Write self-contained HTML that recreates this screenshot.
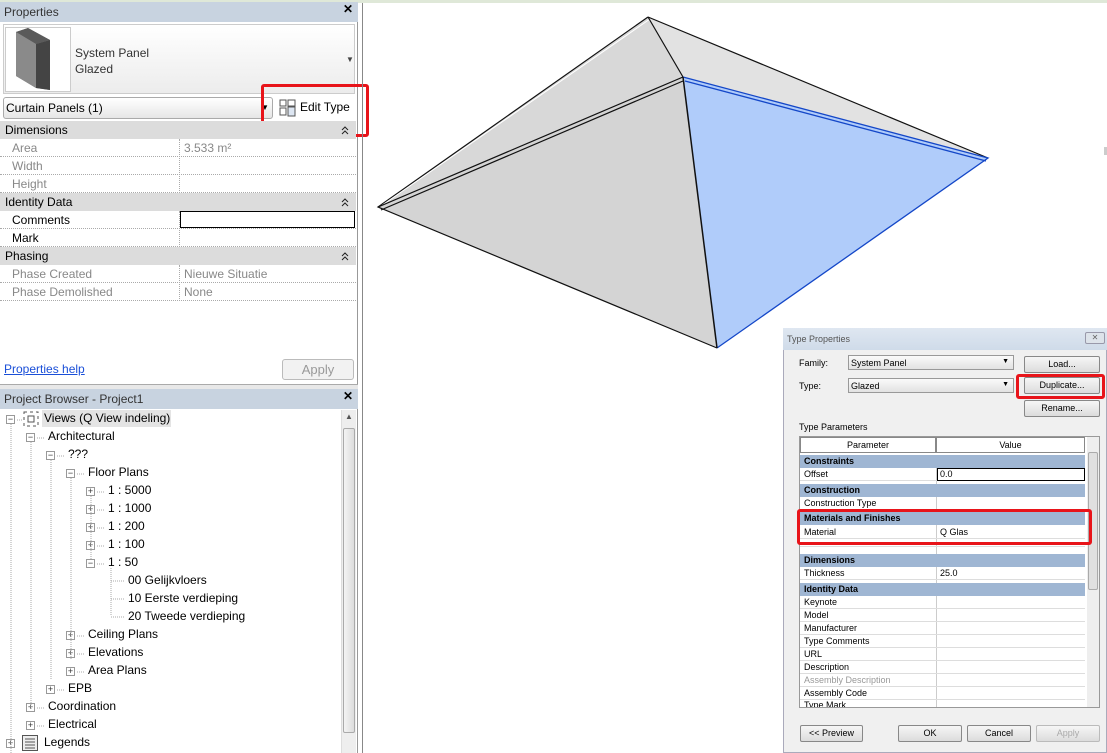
<!DOCTYPE html>
<html><head><meta charset="utf-8"><style>
*{margin:0;padding:0;box-sizing:border-box}
body{width:1107px;height:753px;overflow:hidden;background:#fff;font-family:"Liberation Sans",sans-serif;font-size:12px;color:#000;position:relative}
.a{position:absolute}
.hdr{background:#c8d3e0;color:#333;font-size:12px;padding:3px 4px;height:20px}
.sec{background:#dcdcdc;height:18px;padding:2px 5px;font-size:12px}
.sec i{position:absolute;right:7px;top:4px;width:8px;height:10px}
.row{height:18px;border-bottom:1px dotted #aaa;font-size:12px;color:#888}
.row span{position:absolute;top:2px}
.t{position:absolute;font-size:12px;white-space:nowrap}
.pm{position:absolute;width:9px;height:9px;border:1px solid #999;background:#fff;font-size:9px;line-height:7px;text-align:center;color:#333}
.dl{font-size:9px;font-family:"Liberation Sans",sans-serif}
.g{position:absolute;left:800px;width:285px;height:13px;font-size:9px;border-bottom:1px solid #ddd}
.gs{background:#9fb6d3;font-weight:bold;border:none}
.btn{position:absolute;border:1px solid #888;border-radius:2px;background:linear-gradient(#f6f6f6,#dcdcdc);font-size:9px;text-align:center;line-height:15px}
</style></head><body>
<div class="a" style="left:0;top:0;width:1107px;height:3px;background:#dfe8d8"></div>
<div class="a" style="left:0;top:2px;width:358px;height:751px;background:#fff;border-right:1px solid #999"></div>
<div class="a hdr" style="left:0;top:2px;width:358px">Properties<span style="position:absolute;right:5px;top:0px;font-weight:bold;color:#000">✕</span></div>
<div class="a" style="left:3px;top:24px;width:352px;height:70px;background:linear-gradient(#fff,#ececec);border:1px solid #ccc"></div>
<div class="a" style="left:5px;top:27px;width:66px;height:65px;background:#fff;border:1px solid #ccc"></div>
<svg class="a" style="left:14px;top:28px" width="52" height="64"><polygon points="2,4 14,0 36,12 36,62 22,60 2,48" fill="#777"/><polygon points="22,16 36,12 36,62 22,60" fill="#444"/><polygon points="2,4 14,0 36,12 22,16" fill="#5a5a5a"/><polygon points="2,4 22,16 22,60 2,48" fill="#8a8a8a"/></svg>
<div class="t" style="left:75px;top:46px;color:#333">System Panel</div>
<div class="t" style="left:75px;top:62px;color:#333">Glazed</div>
<div class="t" style="left:346px;top:55px;font-size:8px;color:#444">▼</div>
<div class="a" style="left:3px;top:97px;width:270px;height:22px;border:1px solid #aaa;border-radius:3px;background:linear-gradient(#fff,#e6e6e6)"></div>
<div class="t" style="left:6px;top:101px;color:#000">Curtain Panels (1)</div>
<div class="t" style="left:261px;top:103px;font-size:8px">▼</div>
<svg class="a" style="left:279px;top:99px" width="18" height="18"><rect x="1" y="1" width="6" height="6" fill="none" stroke="#555"/><rect x="1" y="9" width="6" height="7" fill="none" stroke="#555"/><rect x="9" y="1" width="7" height="6" fill="none" stroke="#555"/><rect x="9" y="8" width="7" height="9" fill="#dde6f2" stroke="#555"/></svg>
<div class="t" style="left:300px;top:100px;color:#000">Edit Type</div>
<div class="a" style="left:261px;top:84px;width:108px;height:53px;border:3px solid #e8141a;border-radius:3px"></div>
<div class="a sec" style="left:0;top:121px;width:356px">Dimensions<i><svg width="8" height="10"><path d="M1 4l3-3 3 3M1 8l3-3 3 3" fill="none" stroke="#222"/></svg></i></div>
<div class="a" style="left:0;top:139px;width:356px">
<div class="row" style="position:relative"><span style="left:12px">Area</span><span style="left:184px">3.533 m²</span></div>
<div class="row" style="position:relative"><span style="left:12px">Width</span></div>
<div class="row" style="position:relative"><span style="left:12px">Height</span></div>
</div>
<div class="a sec" style="left:0;top:193px;width:356px">Identity Data<i><svg width="8" height="10"><path d="M1 4l3-3 3 3M1 8l3-3 3 3" fill="none" stroke="#222"/></svg></i></div>
<div class="a" style="left:0;top:211px;width:356px">
<div class="row" style="position:relative;color:#000"><span style="left:12px">Comments</span></div>
<div class="row" style="position:relative;color:#000"><span style="left:12px">Mark</span></div>
</div>
<div class="a" style="left:180px;top:211px;width:175px;height:17px;border:1px solid #000"></div>
<div class="a sec" style="left:0;top:247px;width:356px">Phasing<i><svg width="8" height="10"><path d="M1 4l3-3 3 3M1 8l3-3 3 3" fill="none" stroke="#222"/></svg></i></div>
<div class="a" style="left:0;top:265px;width:356px">
<div class="row" style="position:relative"><span style="left:12px">Phase Created</span><span style="left:184px">Nieuwe Situatie</span></div>
<div class="row" style="position:relative"><span style="left:12px">Phase Demolished</span><span style="left:184px">None</span></div>
</div>
<div class="a" style="left:179px;top:139px;width:1px;height:54px;border-left:1px dotted #aaa"></div>
<div class="a" style="left:179px;top:211px;width:1px;height:36px;border-left:1px dotted #aaa"></div>
<div class="a" style="left:179px;top:265px;width:1px;height:36px;border-left:1px dotted #aaa"></div>
<div class="t" style="left:4px;top:362px;color:#1a4fd8;text-decoration:underline">Properties help</div>
<div class="a" style="left:282px;top:359px;width:72px;height:21px;border:1px solid #bbb;border-radius:3px;background:#f2f2f2;color:#999;text-align:center;line-height:19px;font-size:13px">Apply</div>
<div class="a" style="left:0;top:384px;width:358px;height:5px;background:#e8e8e8;border-top:1px solid #aaa"></div>
<div class="a hdr" style="left:0;top:389px;width:358px">Project Browser - Project1<span style="position:absolute;right:5px;top:0px;font-weight:bold;color:#000">✕</span></div>
<div class="a" style="left:341px;top:410px;width:15px;height:343px;background:#eee;border-left:1px solid #ddd"></div>
<div class="a" style="left:343px;top:428px;width:12px;height:305px;background:linear-gradient(90deg,#f3f3f3,#ddd);border:1px solid #aaa;border-radius:2px"></div>
<div class="t" style="left:345px;top:412px;font-size:8px;color:#555">▲</div>
<div class="a" style="left:42px;top:410px;width:129px;height:17px;background:#e4e4e4"></div>
<div class="pm" style="left:6px;top:415px">−</div><div class="t" style="left:44px;top:411px">Views (Q View indeling)</div>
<svg class="a" style="left:23px;top:411px" width="16" height="16"><rect x="1" y="1" width="14" height="14" fill="none" stroke="#555" stroke-dasharray="3,3"/><rect x="5" y="5" width="6" height="6" fill="none" stroke="#555"/></svg>
<div class="pm" style="left:26px;top:433px">−</div><div class="t" style="left:48px;top:429px">Architectural</div>
<div class="pm" style="left:46px;top:451px">−</div><div class="t" style="left:68px;top:447px">???</div>
<div class="pm" style="left:66px;top:469px">−</div><div class="t" style="left:88px;top:465px">Floor Plans</div>
<div class="pm" style="left:86px;top:487px">+</div><div class="t" style="left:108px;top:483px">1 : 5000</div>
<div class="pm" style="left:86px;top:505px">+</div><div class="t" style="left:108px;top:501px">1 : 1000</div>
<div class="pm" style="left:86px;top:523px">+</div><div class="t" style="left:108px;top:519px">1 : 200</div>
<div class="pm" style="left:86px;top:541px">+</div><div class="t" style="left:108px;top:537px">1 : 100</div>
<div class="pm" style="left:86px;top:559px">−</div><div class="t" style="left:108px;top:555px">1 : 50</div>
<div class="t" style="left:128px;top:573px">00 Gelijkvloers</div>
<div class="t" style="left:128px;top:591px">10 Eerste verdieping</div>
<div class="t" style="left:128px;top:609px">20 Tweede verdieping</div>
<div class="pm" style="left:66px;top:631px">+</div><div class="t" style="left:88px;top:627px">Ceiling Plans</div>
<div class="pm" style="left:66px;top:649px">+</div><div class="t" style="left:88px;top:645px">Elevations</div>
<div class="pm" style="left:66px;top:667px">+</div><div class="t" style="left:88px;top:663px">Area Plans</div>
<div class="pm" style="left:46px;top:685px">+</div><div class="t" style="left:68px;top:681px">EPB</div>
<div class="pm" style="left:26px;top:703px">+</div><div class="t" style="left:48px;top:699px">Coordination</div>
<div class="pm" style="left:26px;top:721px">+</div><div class="t" style="left:48px;top:717px">Electrical</div>
<div class="pm" style="left:6px;top:739px">+</div><div class="t" style="left:44px;top:735px">Legends</div>
<svg class="a" style="left:22px;top:735px" width="16" height="16"><rect x="0.5" y="0.5" width="15" height="15" fill="#eee" stroke="#555"/><path d="M3 4h10M3 7h10M3 10h10M3 13h10" stroke="#555"/></svg>
<svg class="a" style="left:0;top:410px" width="340" height="343"><g stroke="#aaa" stroke-dasharray="1,1" fill="none"><path d="M11 14V343M31 32V300M51 50V270M71 68V250M91 86V150M111 158V205M17 10h5M37 28h8M57 46h8M77 64h8M97 82h8M97 100h8M97 118h8M97 136h8M97 154h8M111 171h14M111 189h14M111 207h14M77 226h8M77 244h8M77 262h8M57 280h8M37 298h8M37 316h8"/></g></svg>
<div class="a" style="left:362px;top:3px;width:1px;height:750px;background:#888"></div>
<div class="a" style="left:1104px;top:147px;width:3px;height:8px;background:#ccc"></div>
<svg class="a" style="left:0;top:0" width="1107" height="753">
<polygon points="648,17 378,207 683,77" fill="#d8d8d8"/>
<polygon points="648,17 683,77 988,158" fill="#e2e2e2"/>
<polygon points="378,207 683,77 717,348" fill="#d4d4d4"/>
<polygon points="683,77 988,158 717,348" fill="#b0ccfa"/>
<g fill="none" stroke="#111" stroke-width="1.2">
<path d="M648,17 L378,207 L717,348"/>
<path d="M650,19 L381,206" stroke="#fff" stroke-width="1"/>
<path d="M648,17 L988,158"/><path d="M648,17 L683,77"/>
<path d="M378,207 L683,77"/><path d="M381,210 L683,81"/>
</g>
<g fill="none" stroke="#1447c8" stroke-width="1.3"><path d="M683,77 L988,158 L717,348"/><path d="M685,81 L986,161"/></g>
<path d="M683,77 L717,348" stroke="#111" stroke-width="1.5"/>
</svg>
<div class="a dl" style="left:783px;top:328px;width:324px;height:425px;background:#f0f0f0;border:1px solid #aab"></div>
<div class="a dl" style="left:783px;top:328px;width:324px;height:22px;background:linear-gradient(#dfe7f1,#cfdbe9);color:#555;padding:6px 4px">Type Properties</div>
<div class="a" style="left:1085px;top:332px;width:20px;height:12px;border:1px solid #99a;border-radius:2px;background:#dde3ea;font-size:8px;text-align:center;line-height:10px;color:#666">✕</div>
<div class="t dl" style="left:799px;top:358px">Family:</div>
<div class="t dl" style="left:799px;top:381px">Type:</div>
<div class="a dl" style="left:848px;top:355px;width:166px;height:15px;border:1px solid #999;background:linear-gradient(#fafafa,#e2e2e2);padding:2px 2px">System Panel<span style="position:absolute;right:4px;font-size:7px">▼</span></div>
<div class="a dl" style="left:848px;top:378px;width:166px;height:15px;border:1px solid #999;background:linear-gradient(#fafafa,#e2e2e2);padding:2px 2px">Glazed<span style="position:absolute;right:4px;font-size:7px">▼</span></div>
<div class="btn" style="left:1024px;top:356px;width:76px;height:17px">Load...</div>
<div class="btn" style="left:1024px;top:377px;width:76px;height:17px">Duplicate...</div>
<div class="btn" style="left:1024px;top:400px;width:76px;height:17px">Rename...</div>
<div class="a" style="left:1016px;top:374px;width:89px;height:25px;border:3px solid #e8141a;border-radius:3px"></div>
<div class="t dl" style="left:799px;top:422px">Type Parameters</div>
<div class="a" style="left:799px;top:436px;width:301px;height:272px;background:#fff;border:1px solid #999"></div>
<div class="a" style="left:1087px;top:437px;width:12px;height:270px;background:#eee"></div>
<div class="a" style="left:1088px;top:452px;width:10px;height:138px;background:#e0e0e0;border:1px solid #aaa;border-radius:2px"></div>
<div class="a" style="left:936px;top:468px;width:1px;height:239px;background:#ccc"></div>
<div class="a dl" style="left:800px;top:437px;width:136px;height:16px;border:1px solid #888;background:#fff;text-align:center;line-height:14px">Parameter</div>
<div class="a dl" style="left:936px;top:437px;width:149px;height:16px;border:1px solid #888;background:#fff;text-align:center;line-height:14px">Value</div>
<div class="g gs" style="top:455px;padding:1px 4px">Constraints</div>
<div class="g" style="top:468px;padding:1px 4px">Offset</div>
<div class="a dl" style="left:937px;top:468px;width:148px;height:13px;border:1px solid #000;padding:0 2px;background:#fff">0.0</div>
<div class="g gs" style="top:484px;padding:1px 4px">Construction</div>
<div class="g" style="top:497px;padding:1px 4px">Construction Type</div>
<div class="g gs" style="top:512px;padding:1px 4px">Materials and Finishes</div>
<div class="g" style="top:526px;padding:1px 4px">Material<span style="position:absolute;left:140px">Q Glas</span></div>
<div class="g" style="top:539px;height:8px"></div>
<div class="g gs" style="top:554px;padding:1px 4px">Dimensions</div>
<div class="g" style="top:567px;padding:1px 4px">Thickness<span style="position:absolute;left:140px">25.0</span></div>
<div class="g gs" style="top:583px;padding:1px 4px">Identity Data</div>
<div class="g" style="top:596px;padding:1px 4px">Keynote</div>
<div class="g" style="top:609px;padding:1px 4px">Model</div>
<div class="g" style="top:622px;padding:1px 4px">Manufacturer</div>
<div class="g" style="top:635px;padding:1px 4px">Type Comments</div>
<div class="g" style="top:648px;padding:1px 4px">URL</div>
<div class="g" style="top:661px;padding:1px 4px">Description</div>
<div class="g" style="top:674px;padding:1px 4px;color:#999">Assembly Description</div>
<div class="g" style="top:687px;padding:1px 4px">Assembly Code</div>
<div class="g" style="top:700px;height:7px;padding:0 4px;overflow:hidden;border:none">Type Mark</div>
<div class="a" style="left:797px;top:509px;width:295px;height:36px;border:3px solid #e8141a;border-radius:3px"></div>
<div class="btn" style="left:800px;top:725px;width:63px;height:17px">&lt;&lt; Preview</div>
<div class="btn" style="left:898px;top:725px;width:64px;height:17px">OK</div>
<div class="btn" style="left:967px;top:725px;width:64px;height:17px">Cancel</div>
<div class="btn" style="left:1036px;top:725px;width:64px;height:17px;color:#aaa;border-color:#bbb">Apply</div>
</body></html>
